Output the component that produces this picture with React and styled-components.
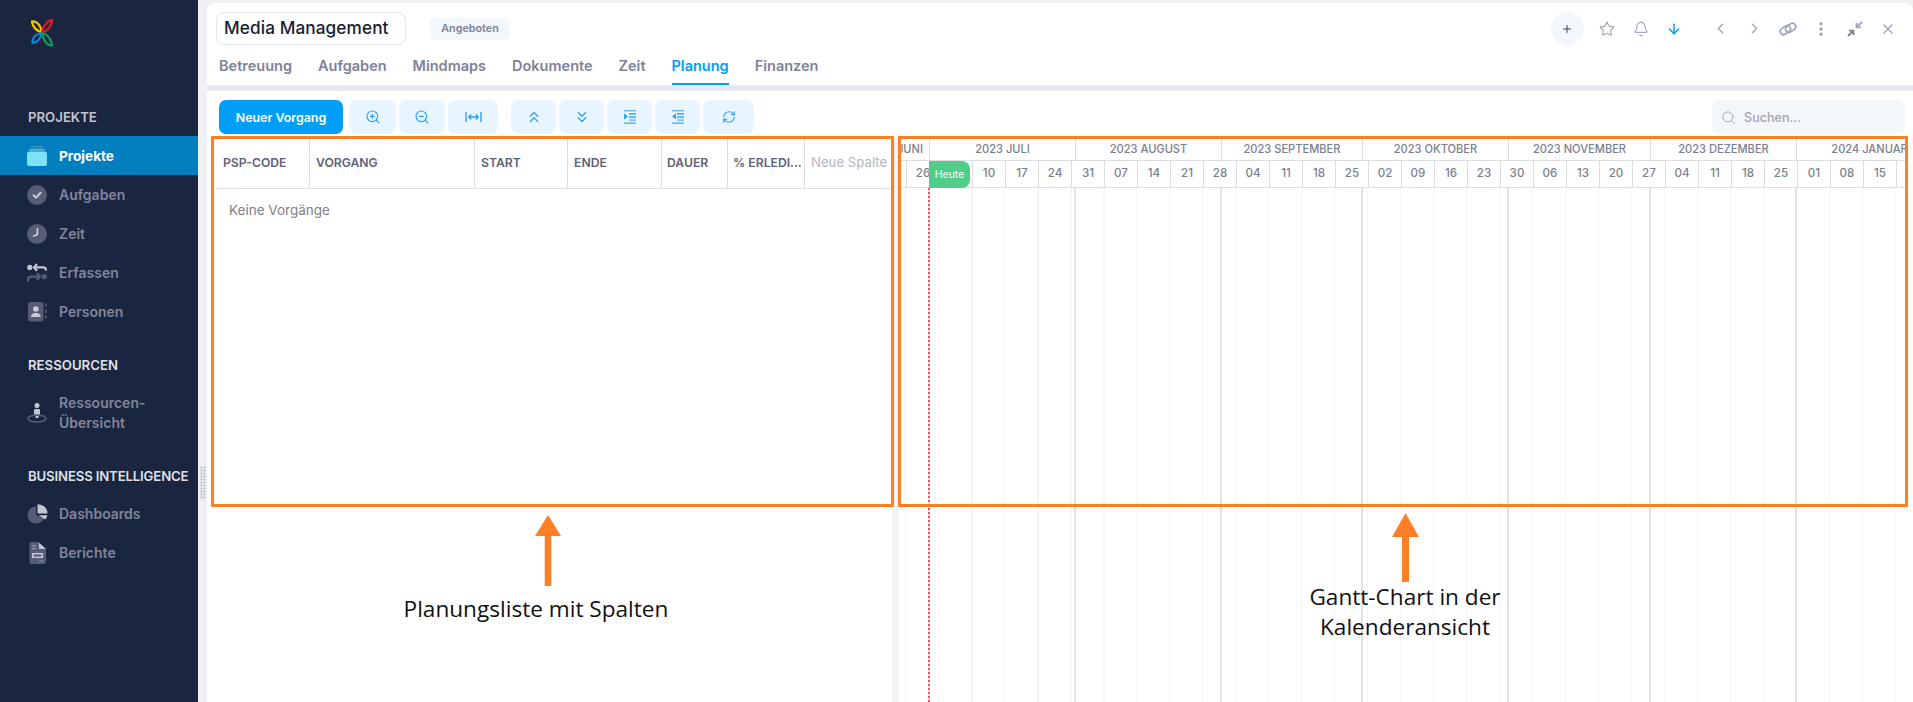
import React from 'react';
import styled, { createGlobalStyle } from 'styled-components';
import {
  Bell,
  ArrowDown,
  ChevronLeft,
  ChevronRight,
  ChevronsUp,
  ChevronsDown,
  EllipsisVertical,
  Plus,
  RefreshCw,
  Search,
  Star,
  X,
  ZoomIn,
  ZoomOut,
} from 'lucide-react';

const GlobalStyle = createGlobalStyle`
  html, body {
    margin: 0;
    padding: 0;
    height: 100%;
    overflow: hidden;
    background: #eff0f2;
    font-family: Inter, "Liberation Sans", sans-serif;
  }
  #root {
    height: 100%;
  }
  * {
    box-sizing: border-box;
  }
`;

const Page = styled.div`
  position: relative;
  display: flex;
  width: 1913px;
  height: 702px;
  overflow: hidden;
`;

const Sidebar = styled.aside`
  width: 198px;
  flex: none;
  background: #1a2540;
  padding-top: 19px;
`;

const LogoBox = styled.div`
  height: 88px;
  padding-left: 31px;
`;

const SectionTitle = styled.div`
  padding-left: 28px;
  height: 20px;
  line-height: 20px;
  font-size: 13.2px;
  font-weight: 600;
  white-space: nowrap;
  letter-spacing: ${({ $tight }) => ($tight ? '-0.15px' : '0')};
  color: ${({ $dim }) => ($dim ? '#c3c6ce' : '#dfe1e6')};
  margin-top: ${({ $top }) => $top || 0}px;
  margin-bottom: ${({ $bottom }) => $bottom || 0}px;
`;

const NavItem = styled.div`
  display: flex;
  align-items: center;
  height: ${({ $tall }) => ($tall ? 48 : 39)}px;
  padding-left: 27px;
  font-size: ${({ $active }) => ($active ? 13.6 : 14)}px;
  line-height: 20px;
  font-weight: ${({ $active }) => ($active ? 700 : 600)};
  color: ${({ $active }) => ($active ? '#ffffff' : '#80859b')};
  background: ${({ $active }) => ($active ? '#027fbf' : 'transparent')};
`;

const NavIcon = styled.span`
  display: flex;
  width: 32px;
  flex: none;
`;

const Splitter = styled.div`
  position: absolute;
  left: 200px;
  top: 466px;
  width: 6px;
  height: 33px;
  background-image: radial-gradient(#c9ccd2 1px, transparent 1.2px);
  background-size: 3px 3px;
`;

const Main = styled.main`
  flex: 1;
  min-width: 0;
  display: flex;
  flex-direction: column;
  margin-left: 9px;
  padding-top: 3px;
`;

const HeaderCard = styled.header`
  height: 82px;
  flex: none;
  background: #ffffff;
  border-radius: 8px 8px 0 0;
  padding: 9px 8px 0 9px;
`;

const HeaderTop = styled.div`
  display: flex;
  align-items: center;
  height: 33px;
`;

const TitleBox = styled.div`
  width: 190px;
  height: 33px;
  border: 1px solid #e4e6ef;
  border-radius: 8px;
  padding-left: 7px;
  line-height: 29px;
  font-size: 17.2px;
  font-weight: 500;
  letter-spacing: 0.1px;
  white-space: nowrap;
  color: #181c32;
`;

const Badge = styled.span`
  margin-left: 24px;
  width: 80px;
  height: 22px;
  border-radius: 6px;
  background: #f3f6fa;
  text-align: center;
  line-height: 22px;
  font-size: 10.8px;
  font-weight: 600;
  color: #7e8299;
`;

const HeaderActions = styled.div`
  margin-left: auto;
  display: flex;
  align-items: center;
`;

const RoundButton = styled.span`
  display: flex;
  align-items: center;
  justify-content: center;
  width: 33px;
  height: 33px;
  margin-right: 7px;
  border-radius: 50%;
  background: #f3f6fa;
  color: #3f4254;
`;

const ActionIcon = styled.span`
  display: flex;
  align-items: center;
  justify-content: center;
  width: 33.5px;
  height: 33px;
  margin-right: ${({ $gap }) => $gap || 0}px;
  color: ${({ $blue }) => ($blue ? '#009ef7' : '#a1a5b7')};
`;

const Tabs = styled.nav`
  display: flex;
  gap: 26px;
  margin-top: 7px;
  padding-left: 3px;
`;

const Tab = styled.span`
  height: 33px;
  padding-top: 3px;
  line-height: 21px;
  font-size: 14.5px;
  font-weight: 600;
  white-space: nowrap;
  color: ${({ $active }) => ($active ? '#009ef7' : '#7e8299')};
  border-bottom: 2px solid ${({ $active }) => ($active ? '#009ef7' : 'transparent')};
`;

const GapBar = styled.div`
  height: 6px;
  flex: none;
  background: #e8eaed;
`;

const ContentCard = styled.section`
  flex: 1;
  min-height: 0;
  display: flex;
  flex-direction: column;
  background: #ffffff;
`;

const Toolbar = styled.div`
  display: flex;
  align-items: center;
  height: 34px;
  margin-top: 9px;
  padding: 0 8px 0 12px;
`;

const PrimaryButton = styled.button`
  width: 124px;
  height: 34px;
  margin-right: 6px;
  border: 0;
  border-radius: 7px;
  background: #009ef7;
  color: #ffffff;
  font-family: inherit;
  font-size: 12.4px;
  font-weight: 600;
`;

const ToolButton = styled.button`
  display: flex;
  align-items: center;
  justify-content: center;
  width: ${({ $w }) => $w}px;
  height: 34px;
  margin-right: ${({ $gap }) => $gap ?? 3}px;
  padding: 0;
  border: 0;
  border-radius: 8px;
  background: #e8f5ff;
  color: #2b9ff5;
`;

const SearchBox = styled.div`
  margin-left: auto;
  display: flex;
  align-items: center;
  gap: 8px;
  width: 193px;
  height: 34px;
  padding-left: 9px;
  border-radius: 7px;
  background: #f3f6fa;
  color: #a1a5b7;
  font-size: 12.6px;
  font-weight: 500;
`;

const Split = styled.div`
  flex: 1;
  min-height: 0;
  display: flex;
  margin-top: 5px;
`;

const TablePanel = styled.div`
  width: 685px;
  flex: none;
  padding-left: 9px;
`;

const TableHead = styled.div`
  display: flex;
  height: 50px;
  border-bottom: 1.5px solid #dcdde0;
`;

const HeadCell = styled.div`
  width: ${({ $w }) => $w}px;
  flex: none;
  padding-left: ${({ $pad }) => $pad}px;
  line-height: 47px;
  font-size: ${({ $muted }) => ($muted ? 13.2 : 12.2)}px;
  font-weight: ${({ $muted }) => ($muted ? 400 : 600)};
  white-space: nowrap;
  color: ${({ $muted }) => ($muted ? '#b5b5c3' : '#5e6278')};
  border-right: ${({ $muted }) => ($muted ? 0 : '1.5px solid #dcdde0')};
`;

const EmptyText = styled.div`
  padding: 11px 0 0 13px;
  line-height: 20px;
  font-size: 13.5px;
  color: #7f8088;
`;

const SplitBar = styled.div`
  width: 7px;
  flex: none;
  background: #f1f3f4;
`;

const GanttPanel = styled.div`
  position: relative;
  flex: 1;
  min-width: 0;
  display: flex;
  flex-direction: column;
  overflow: hidden;
  margin-right: 7px;
`;

const MonthRow = styled.div`
  display: flex;
  flex: none;
  height: 22px;
  border-bottom: 1.5px solid #dcdde0;
`;

const MonthCell = styled.div`
  display: flex;
  justify-content: ${({ $end }) => ($end ? 'flex-end' : 'center')};
  width: ${({ $w }) => $w}px;
  flex: none;
  padding-right: ${({ $end }) => ($end ? 6 : 0)}px;
  overflow: hidden;
  line-height: 20px;
  font-size: 11.1px;
  font-weight: 500;
  white-space: nowrap;
  color: #7a7f90;
  border-right: 1.5px solid #dcdde0;
`;

const WeekRow = styled.div`
  display: flex;
  flex: none;
  height: 27px;
  border-bottom: 1.5px solid #dcdde0;
`;

const WeekCell = styled.div`
  width: ${({ $w }) => $w}px;
  flex: none;
  text-align: center;
  line-height: 25px;
  font-size: 11.6px;
  font-weight: 500;
  color: #7a7f90;
  border-right: 1.5px solid #dcdde0;
`;

const GanttBody = styled.div`
  flex: 1;
  min-height: 0;
  display: flex;
  background-image: repeating-linear-gradient(
    to right,
    #f4f5f6 0,
    #f4f5f6 1.5px,
    transparent 1.5px,
    transparent 33px
  );
  background-position: 6px 0;
`;

const MonthColumn = styled.div`
  width: ${({ $w }) => $w}px;
  flex: none;
  border-right: 2px solid #e1e2e4;
`;

const TodayLine = styled.div`
  position: absolute;
  left: 29px;
  top: 49px;
  bottom: 0;
  border-left: 2px dotted #f5525f;
`;

const TodayTag = styled.div`
  position: absolute;
  left: 30px;
  top: 22px;
  width: 41px;
  height: 27px;
  border-radius: 0 8px 8px 0;
  background: #50cd89;
  color: #ffffff;
  text-align: center;
  line-height: 27px;
  font-size: 10.4px;
  font-weight: 400;
`;

const Frame = styled.div`
  position: absolute;
  left: ${({ $x }) => $x}px;
  top: 136px;
  width: ${({ $w }) => $w}px;
  height: 371px;
  border: 3px solid #ff7f27;
  pointer-events: none;
`;

const Pointer = styled.svg`
  position: absolute;
  left: ${({ $x }) => $x}px;
  top: ${({ $y }) => $y}px;
`;

const Note = styled.div`
  position: absolute;
  left: ${({ $x }) => $x}px;
  top: ${({ $y }) => $y}px;
  width: 300px;
  text-align: center;
  line-height: 30px;
  font-family: "Open Sans", "Noto Sans", sans-serif;
  font-size: 22.6px;
  color: #111111;
`;

function Logo() {
  return (
    <svg width="22" height="28" viewBox="0 0 22 28" fill="none" strokeWidth="2.2">
      <path d="M1 2.5C5 1.5 10 6 10.5 13C6 12.5 1.5 8 1 2.5Z" stroke="#f5c400" />
      <path d="M21 0.8C21 6 17 12 11 13.5C11.5 8 15.5 2 21 0.8Z" stroke="#e11b22" />
      <path d="M1.5 24C1 19 5 14.5 10.5 14C10 19 6.5 23.5 1.5 24Z" stroke="#0a84d6" />
      <path d="M21 26.5C15.5 26.5 11.5 20 11.5 14.5C17 15 20.5 21 21 26.5Z" stroke="#0f9d58" />
    </svg>
  );
}

const iconGrey = '#565c75';

function ProjectsIcon() {
  return (
    <svg width="20" height="20" viewBox="0 0 20 20">
      <rect x="4" y="0" width="12" height="1.6" rx="0.8" fill="#3e97b8" />
      <rect x="2" y="2.8" width="16" height="2" rx="1" fill="#5cb8d0" />
      <rect x="0" y="5.6" width="20" height="14.4" rx="2.5" fill="#7be3f2" />
    </svg>
  );
}

function TasksIcon() {
  return (
    <svg width="20" height="20" viewBox="0 0 20 20" fill="none">
      <circle cx="10" cy="10" r="10" fill={iconGrey} />
      <path d="M6.5 10.2L9 12.6L13.6 7.8" stroke="#c9ccd6" strokeWidth="2" strokeLinecap="round" strokeLinejoin="round" />
    </svg>
  );
}

function TimeIcon() {
  return (
    <svg width="20" height="20" viewBox="0 0 20 20" fill="none">
      <circle cx="10" cy="10" r="10" fill={iconGrey} />
      <path d="M10.4 4.6V10.6L6.6 12" stroke="#c9ccd6" strokeWidth="1.8" strokeLinecap="round" strokeLinejoin="round" />
    </svg>
  );
}

function LogIcon() {
  return (
    <svg width="20" height="20" viewBox="0 0 20 20" fill="none">
      <circle cx="2.8" cy="4.4" r="2.6" fill="#c3c6d0" />
      <path d="M7 4.4H16.5C18.2 4.4 19 5.5 19 7.5M10 1L7 4.4L10 7.8" stroke="#c3c6d0" strokeWidth="2.2" />
      <circle cx="17.2" cy="13.6" r="2.6" fill={iconGrey} />
      <path d="M13 13.6H3.5C1.8 13.6 1 14.6 1 18.5M10 10.2L13 13.6L10 17" stroke={iconGrey} strokeWidth="2.2" />
    </svg>
  );
}

function PeopleIcon() {
  return (
    <svg width="20" height="20" viewBox="0 0 20 20" fill="none">
      <rect x="1" y="0" width="15.5" height="19.5" rx="2.5" fill={iconGrey} />
      <circle cx="8.8" cy="7" r="2.8" fill="#c9ccd6" />
      <path d="M4 15C4 12 6 11 8.8 11C11.6 11 13.6 12 13.6 15Z" fill="#c9ccd6" />
      <path d="M18.8 1.5V5M18.8 7.5V11M18.8 13.5V17" stroke={iconGrey} strokeWidth="1.6" />
    </svg>
  );
}

function ResourceIcon() {
  return (
    <svg width="20" height="20" viewBox="0 0 20 20" fill="none">
      <circle cx="10" cy="2.6" r="2.5" fill="#c3c6d0" />
      <path d="M7 7C7 6 8 6 10 6C12 6 13 6 13 7V11.5L11.5 12V15H8.5V12L7 11.5Z" fill="#c3c6d0" />
      <ellipse cx="10" cy="15.5" rx="9" ry="3.4" stroke={iconGrey} strokeWidth="1.6" />
    </svg>
  );
}

function PieIcon() {
  return (
    <svg width="21" height="20" viewBox="0 0 21 20">
      <path d="M9 2.4A8.6 8.6 0 1 0 17 14.5L9 11Z" fill={iconGrey} />
      <path d="M10.5 0.2A9.5 9.5 0 0 1 20.5 9.6H10.5Z" fill="#c3c6d0" />
      <path d="M11.5 11.2H20.5A9.5 9.5 0 0 1 18 15.6Z" fill="#c3c6d0" />
    </svg>
  );
}

function ReportIcon() {
  return (
    <svg width="20" height="22" viewBox="0 0 20 22">
      <path d="M4.5 0H11L19 7.5V20C19 21 18 22 17 22H4.5C3.5 22 2.5 21 2.5 20V2C2.5 1 3.5 0 4.5 0Z" fill={iconGrey} />
      <path d="M12 0.5L19 7H12Z" fill="#c3c6d0" />
      <rect x="5" y="3" width="4" height="1.4" fill="#8d92a6" />
      <rect x="5" y="6" width="4" height="1.4" fill="#8d92a6" />
      <rect x="5" y="11" width="11" height="5" rx="0.6" fill="#c9ccd6" />
      <rect x="6.5" y="12.4" width="8" height="2.2" fill={iconGrey} />
      <rect x="12" y="18.4" width="4" height="1.2" fill="#8d92a6" />
    </svg>
  );
}

function ChainIcon() {
  return (
    <svg width="18" height="18" viewBox="0 0 18 18" fill="none" stroke="#a1a5b7" strokeWidth="1.7">
      <rect x="0.8" y="6.8" width="11" height="6.5" rx="3.25" transform="rotate(-35 6.3 10)" />
      <rect x="6.2" y="4.6" width="11" height="6.5" rx="3.25" transform="rotate(-35 11.7 8)" />
    </svg>
  );
}

function CollapseIcon() {
  return (
    <svg width="16" height="16" viewBox="0 0 16 16" fill="none" strokeWidth="1.9">
      <path d="M15 1L9.8 6.2M9.6 2V6.4H14" stroke="#a1a5b7" />
      <path d="M1 15L6.2 9.8M6.4 14V9.6H2" stroke="#7e8299" />
    </svg>
  );
}

function FitIcon() {
  return (
    <svg width="17" height="12" viewBox="0 0 17 12" fill="none" stroke="currentColor" strokeWidth="1.4">
      <path d="M1 1V11M16 1V11M4 6H13M6.2 3.6L3.8 6L6.2 8.4M10.8 3.6L13.2 6L10.8 8.4" />
    </svg>
  );
}

function IndentIcon({ flip }) {
  return (
    <svg width="12" height="14" viewBox="0 0 12 14" fill="currentColor">
      <rect x="0" y="0" width="12" height="1.4" opacity="0.7" />
      <rect x="5" y="3.2" width="7" height="1.4" />
      <rect x="5" y="6.4" width="7" height="1.4" />
      <rect x="0" y="12.4" width="12" height="1.6" opacity="0.7" />
      <rect x="5" y="9.4" width="7" height="1.4" opacity="0.7" />
      <path d={flip ? 'M4 3.4V9.4L0 6.4Z' : 'M0 3.4V9.4L4 6.4Z'} />
    </svg>
  );
}

const tabs = ['Betreuung', 'Aufgaben', 'Mindmaps', 'Dokumente', 'Zeit', 'Planung', 'Finanzen'];

const columns = [
  { label: 'PSP-CODE', w: 94, pad: 7 },
  { label: 'VORGANG', w: 165, pad: 6 },
  { label: 'START', w: 93, pad: 6 },
  { label: 'ENDE', w: 94, pad: 6 },
  { label: 'DAUER', w: 66, pad: 5 },
  { label: '% ERLEDI...', w: 77, pad: 5 },
];

const months = [
  { label: '2023 JUNI', w: 31, end: true },
  { label: '2023 JULI', w: 146 },
  { label: '2023 AUGUST', w: 146 },
  { label: '2023 SEPTEMBER', w: 141 },
  { label: '2023 OKTOBER', w: 146 },
  { label: '2023 NOVEMBER', w: 142 },
  { label: '2023 DEZEMBER', w: 146 },
  { label: '2024 JANUAR', w: 146 },
];

const weeks = [
  '26', '03', '10', '17', '24', '31', '07', '14', '21', '28', '04', '11', '18', '25', '02',
  '09', '16', '23', '30', '06', '13', '20', '27', '04', '11', '18', '25', '01', '08', '15',
];

export default function App() {
  return (
    <Page>
      <GlobalStyle />
      <Sidebar>
        <LogoBox>
          <Logo />
        </LogoBox>
        <SectionTitle $dim $bottom={9}>PROJEKTE</SectionTitle>
        <NavItem $active>
          <NavIcon><ProjectsIcon /></NavIcon>Projekte
        </NavItem>
        <NavItem>
          <NavIcon><TasksIcon /></NavIcon>Aufgaben
        </NavItem>
        <NavItem>
          <NavIcon><TimeIcon /></NavIcon>Zeit
        </NavItem>
        <NavItem>
          <NavIcon><LogIcon /></NavIcon>Erfassen
        </NavItem>
        <NavItem>
          <NavIcon><PeopleIcon /></NavIcon>Personen
        </NavItem>
        <SectionTitle $top={24} $bottom={14}>RESSOURCEN</SectionTitle>
        <NavItem $tall>
          <NavIcon><ResourceIcon /></NavIcon>
          <span>Ressourcen-<br />Übersicht</span>
        </NavItem>
        <SectionTitle $top={29} $bottom={8} $tight>BUSINESS INTELLIGENCE</SectionTitle>
        <NavItem>
          <NavIcon><PieIcon /></NavIcon>Dashboards
        </NavItem>
        <NavItem>
          <NavIcon><ReportIcon /></NavIcon>Berichte
        </NavItem>
      </Sidebar>
      <Splitter />
      <Main>
        <HeaderCard>
          <HeaderTop>
            <TitleBox>Media Management</TitleBox>
            <Badge>Angeboten</Badge>
            <HeaderActions>
              <RoundButton><Plus size={12} strokeWidth={2} /></RoundButton>
              <ActionIcon><Star size={16} strokeWidth={1.7} /></ActionIcon>
              <ActionIcon><Bell size={16} strokeWidth={1.7} /></ActionIcon>
              <ActionIcon $blue $gap={13}><ArrowDown size={16} strokeWidth={2.2} /></ActionIcon>
              <ActionIcon><ChevronLeft size={17} strokeWidth={2} /></ActionIcon>
              <ActionIcon><ChevronRight size={17} strokeWidth={2} /></ActionIcon>
              <ActionIcon><ChainIcon /></ActionIcon>
              <ActionIcon><EllipsisVertical size={18} strokeWidth={2.4} /></ActionIcon>
              <ActionIcon><CollapseIcon /></ActionIcon>
              <ActionIcon><X size={16} strokeWidth={2} /></ActionIcon>
            </HeaderActions>
          </HeaderTop>
          <Tabs>
            {tabs.map((tab) => (
              <Tab key={tab} $active={tab === 'Planung'}>{tab}</Tab>
            ))}
          </Tabs>
        </HeaderCard>
        <GapBar />
        <ContentCard>
          <Toolbar>
            <PrimaryButton>Neuer Vorgang</PrimaryButton>
            <ToolButton $w={47}><ZoomIn size={16} strokeWidth={1.7} /></ToolButton>
            <ToolButton $w={46}><ZoomOut size={16} strokeWidth={1.7} /></ToolButton>
            <ToolButton $w={50} $gap={13}><FitIcon /></ToolButton>
            <ToolButton $w={45}><ChevronsUp size={18} strokeWidth={1.6} /></ToolButton>
            <ToolButton $w={45}><ChevronsDown size={18} strokeWidth={1.6} /></ToolButton>
            <ToolButton $w={45}><IndentIcon /></ToolButton>
            <ToolButton $w={45}><IndentIcon flip /></ToolButton>
            <ToolButton $w={51}><RefreshCw size={14} strokeWidth={1.9} /></ToolButton>
            <SearchBox><Search size={15} strokeWidth={1.5} />Suchen...</SearchBox>
          </Toolbar>
          <Split>
            <TablePanel>
              <TableHead>
                {columns.map((col) => (
                  <HeadCell key={col.label} $w={col.w} $pad={col.pad}>{col.label}</HeadCell>
                ))}
                <HeadCell $w={84} $pad={6} $muted>Neue Spalte</HeadCell>
              </TableHead>
              <EmptyText>Keine Vorgänge</EmptyText>
            </TablePanel>
            <SplitBar />
            <GanttPanel>
              <MonthRow>
                {months.map((m) => (
                  <MonthCell key={m.label} $w={m.w} $end={m.end}>{m.label}</MonthCell>
                ))}
              </MonthRow>
              <WeekRow>
                <WeekCell $w={8} />
                {weeks.map((week, index) => (
                  <WeekCell key={index} $w={33}>{week}</WeekCell>
                ))}
              </WeekRow>
              <GanttBody>
                {months.map((m) => (
                  <MonthColumn key={m.label} $w={m.w} />
                ))}
              </GanttBody>
              <TodayLine />
              <TodayTag>Heute</TodayTag>
            </GanttPanel>
          </Split>
        </ContentCard>
      </Main>

      <Frame $x={211} $w={683} />
      <Frame $x={898} $w={1010} />
      <Pointer $x={535} $y={515} width="26" height="71" viewBox="0 0 26 71">
        <path d="M13 0L26 21H16.3V71H9.7V21H0Z" fill="#ff7f27" />
      </Pointer>
      <Pointer $x={1392} $y={513} width="27" height="69" viewBox="0 0 27 69">
        <path d="M13.5 0L27 24H17V69H10V24H0Z" fill="#ff7f27" />
      </Pointer>
      <Note $x={386} $y={594}>Planungsliste mit Spalten</Note>
      <Note $x={1255} $y={582}>Gantt-Chart in der<br />Kalenderansicht</Note>
    </Page>
  );
}
